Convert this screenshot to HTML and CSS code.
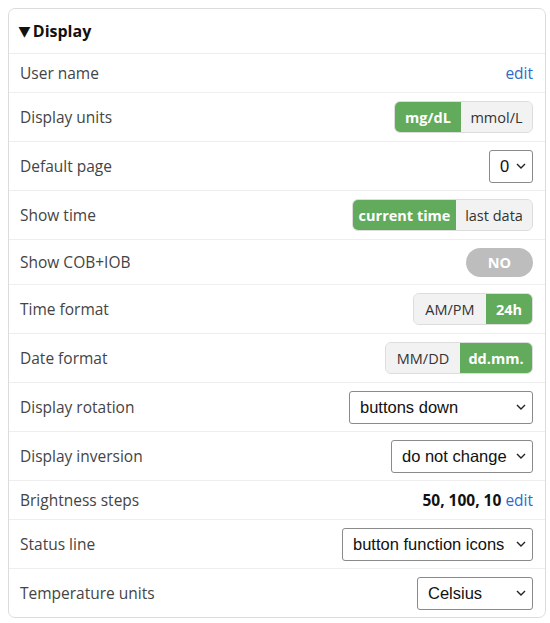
FILE: index.html
```
<!DOCTYPE html>
<html>
<head>
<meta charset="utf-8">
<link rel="stylesheet" href="styles.css">
</head>
<body>
<div class="card">
  <div class="card-head"><span class="tri">▼</span>Display</div>
  <div class="row text-row">
    <span class="label">User name</span>
    <a class="link">edit</a>
  </div>
  <div class="row">
    <span class="label">Display units</span>
    <div class="seg"><span class="opt on w-mg">mg/dL</span><span class="opt w-mmol">mmol/L</span></div>
  </div>
  <div class="row">
    <span class="label">Default page</span>
    <div class="sel w-page"><span>0</span><svg class="chev" viewBox="0 0 10 6"><path d="M1 1l4 4 4-4" /></svg></div>
  </div>
  <div class="row">
    <span class="label">Show time</span>
    <div class="seg"><span class="opt on w-cur">current time</span><span class="opt w-last">last data</span></div>
  </div>
  <div class="row cob-row">
    <span class="label">Show COB+IOB</span>
    <span class="pill">NO</span>
  </div>
  <div class="row">
    <span class="label">Time format</span>
    <div class="seg"><span class="opt w-ampm">AM/PM</span><span class="opt on w-24">24h</span></div>
  </div>
  <div class="row">
    <span class="label">Date format</span>
    <div class="seg"><span class="opt w-mmdd">MM/DD</span><span class="opt on w-ddmm">dd.mm.</span></div>
  </div>
  <div class="row">
    <span class="label">Display rotation</span>
    <div class="sel w-rot"><span>buttons down</span><svg class="chev" viewBox="0 0 10 6"><path d="M1 1l4 4 4-4" /></svg></div>
  </div>
  <div class="row">
    <span class="label">Display inversion</span>
    <div class="sel w-inv"><span>do not change</span><svg class="chev" viewBox="0 0 10 6"><path d="M1 1l4 4 4-4" /></svg></div>
  </div>
  <div class="row text-row">
    <span class="label">Brightness steps</span>
    <span class="val"><b>50, 100, 10</b> <a class="link">edit</a></span>
  </div>
  <div class="row">
    <span class="label">Status line</span>
    <div class="sel w-status"><span>button function icons</span><svg class="chev" viewBox="0 0 10 6"><path d="M1 1l4 4 4-4" /></svg></div>
  </div>
  <div class="row">
    <span class="label">Temperature units</span>
    <div class="sel w-temp"><span>Celsius</span><svg class="chev" viewBox="0 0 10 6"><path d="M1 1l4 4 4-4" /></svg></div>
  </div>
</div>
</body>
</html>
```

FILE: styles.css
```
html, body {
  background: #ffffff;
}
body {
  margin: 8px 4px 8px 8px;
  font-family: "Segoe UI", "Open Sans", "Noto Sans", sans-serif;
  font-size: 15.5px;
  color: #333;
}
.card {
  border: 1px solid #dcdcdc;
  border-radius: 7px;
  background: #fff;
}
.card-head {
  padding: 11px 12px 11px 10px;
  line-height: 22px;
  height: 22px;
  font-weight: 700;
  font-size: 16px;
  color: #111;
  display: flex;
  align-items: center;
}
.tri {
  font-family: "DejaVu Sans", sans-serif;
  font-size: 14px;
  margin-right: 3px;
  display: inline-block;
  transform: scaleX(1.1);
}
.row {
  display: flex;
  align-items: center;
  justify-content: space-between;
  border-top: 1px solid #eeeeee;
  padding: 8px 12px 8px 11px;
  height: 32px;
}
.text-row {
  height: 22px;
}
.cob-row {
  height: 28px;
}
.label {
  line-height: 22px;
  color: #444;
}
.link {
  color: #2e6bc6;
  cursor: pointer;
}
.val {
  line-height: 22px;
  color: #111;
}
.val b {
  font-weight: 700;
}
.seg {
  display: flex;
  border: 1px solid #dddddd;
  border-radius: 6px;
  overflow: hidden;
  height: 30px;
  background: #f2f2f2;
}
.opt {
  display: flex;
  align-items: center;
  justify-content: center;
  font-size: 14.5px;
  color: #333;
  background: #f2f2f2;
}
.opt.on {
  background: #62aa5c;
  color: #fff;
  font-weight: 700;
}
.w-mg { width: 66px; }
.w-mmol { width: 71px; }
.w-cur { width: 103px; }
.w-last { width: 76px; }
.w-ampm { width: 72px; }
.w-24 { width: 46px; }
.w-mmdd { width: 74px; }
.w-ddmm { width: 72px; }
.pill {
  width: 67px;
  height: 29px;
  border-radius: 15px;
  background: #bdbdbd;
  color: #fff;
  font-weight: 700;
  font-size: 14.5px;
  display: flex;
  align-items: center;
  justify-content: center;
}
.sel {
  box-sizing: border-box;
  height: 33px;
  border: 1px solid #8a8a8a;
  border-radius: 3px;
  display: flex;
  align-items: center;
  justify-content: space-between;
  padding: 0 6px 0 10px;
  font-family: "Liberation Sans", Arial, sans-serif;
  font-size: 16.5px;
  color: #111;
  background: #fff;
}
.chev {
  width: 10px;
  height: 6px;
  fill: none;
  stroke: #222;
  stroke-width: 1.4;
}
.w-page { width: 44px; }
.w-rot { width: 184px; }
.w-inv { width: 142px; }
.w-status { width: 191px; }
.w-temp { width: 116px; }
```
